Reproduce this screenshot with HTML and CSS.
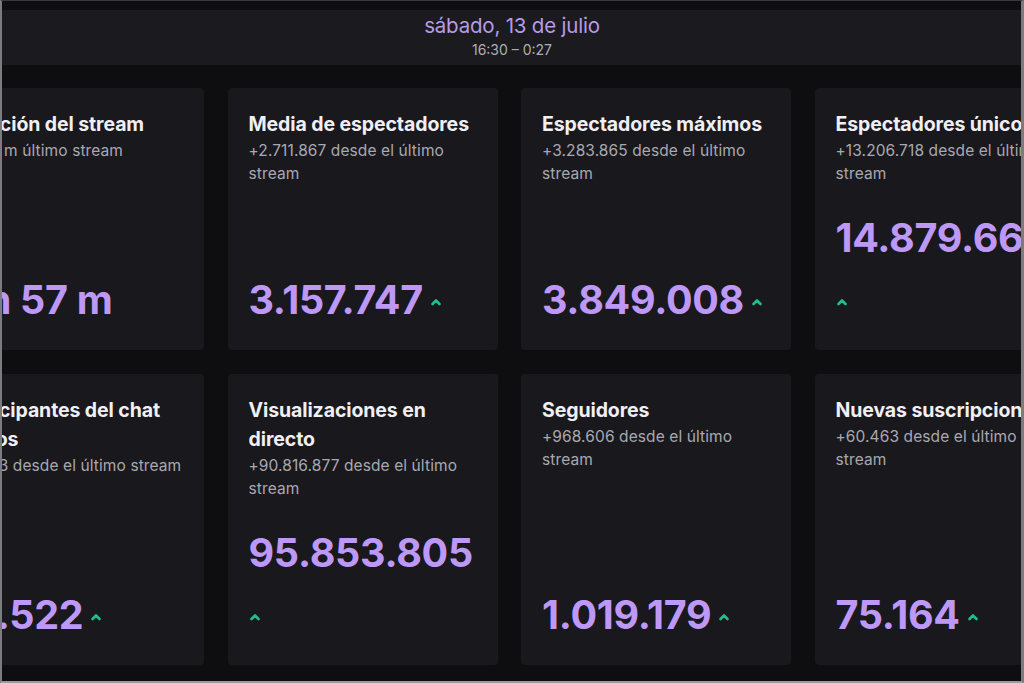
FILE: index.html
```html
<!DOCTYPE html>
<html lang="es">
<head>
<meta charset="utf-8">
<title>Resumen del stream</title>
<link rel="stylesheet" href="styles.css">
</head>
<body>
<div class="frame">
  <header class="topbar">
    <div class="date">sábado, 13 de julio</div>
    <div class="time">16:30 – 0:27</div>
  </header>
  <main class="grid">
    <section class="card">
      <h2 class="title">Duración del stream</h2>
      <p class="sub">+1 h 8 m último stream</p>
      <div class="value"><span class="num">7 h 57 m</span></div>
    </section>
    <section class="card">
      <h2 class="title">Media de espectadores</h2>
      <p class="sub">+2.711.867 desde el último stream</p>
      <div class="value"><span class="num">3.157.747</span><span class="up"><svg viewBox="0 0 12 8" width="12" height="8"><path d="M2.5 6 L6 2.5 L9.5 6"/></svg></span></div>
    </section>
    <section class="card">
      <h2 class="title">Espectadores máximos</h2>
      <p class="sub">+3.283.865 desde el último stream</p>
      <div class="value"><span class="num">3.849.008</span><span class="up"><svg viewBox="0 0 12 8" width="12" height="8"><path d="M2.5 6 L6 2.5 L9.5 6"/></svg></span></div>
    </section>
    <section class="card">
      <h2 class="title">Espectadores únicos</h2>
      <p class="sub">+13.206.718 desde el último stream</p>
      <div class="value"><span class="num">14.879.668</span><span class="up"><svg viewBox="0 0 12 8" width="12" height="8"><path d="M2.5 6 L6 2.5 L9.5 6"/></svg></span></div>
    </section>
    <section class="card">
      <h2 class="title">Participantes del chat únicos</h2>
      <p class="sub">+4.603 desde el último stream</p>
      <div class="value"><span class="num">41.522</span><span class="up"><svg viewBox="0 0 12 8" width="12" height="8"><path d="M2.5 6 L6 2.5 L9.5 6"/></svg></span></div>
    </section>
    <section class="card">
      <h2 class="title">Visualizaciones en directo</h2>
      <p class="sub">+90.816.877 desde el último stream</p>
      <div class="value"><span class="num">95.853.805</span><span class="up"><svg viewBox="0 0 12 8" width="12" height="8"><path d="M2.5 6 L6 2.5 L9.5 6"/></svg></span></div>
    </section>
    <section class="card">
      <h2 class="title">Seguidores</h2>
      <p class="sub">+968.606 desde el último stream</p>
      <div class="value"><span class="num">1.019.179</span><span class="up"><svg viewBox="0 0 12 8" width="12" height="8"><path d="M2.5 6 L6 2.5 L9.5 6"/></svg></span></div>
    </section>
    <section class="card">
      <h2 class="title">Nuevas suscripciones</h2>
      <p class="sub">+60.463 desde el último stream</p>
      <div class="value"><span class="num">75.164</span><span class="up"><svg viewBox="0 0 12 8" width="12" height="8"><path d="M2.5 6 L6 2.5 L9.5 6"/></svg></span></div>
    </section>
  </main>
</div>
</body>
</html>
```

FILE: styles.css
```css
* { box-sizing: border-box; }

html, body {
  margin: 0;
  padding: 0;
  background: #0e0e11;
}

body {
  font-family: Inter, "Noto Sans", "Liberation Sans", sans-serif;
  color: #efeff1;
}

.frame {
  width: 1024px;
  height: 683px;
  overflow: hidden;
  background: #0e0e11;
  border-top: 1px solid #3a3a3e;
  border-left: 2px solid #7c7c80;
  border-right: 3px solid #7c7c80;
  border-bottom: 2px solid #9a9a9e;
  padding-top: 9px;
}

.topbar {
  height: 55px;
  margin-left: -2px;
  margin-right: -3px;
  background: #1b1a1f;
  display: flex;
  flex-direction: column;
  align-items: center;
  padding-top: 3px;
}

.date {
  font-size: 20.5px;
  line-height: 26px;
  color: #b79be6;
  letter-spacing: -0.2px;
}

.time {
  margin-top: 1px;
  font-size: 14px;
  line-height: 19px;
  color: #aeaeb6;
}

.grid {
  margin-top: 23px;
  margin-left: -68px;
  display: grid;
  grid-template-columns: repeat(4, 270px);
  column-gap: 23.5px;
  row-gap: 24px;
}

.card {
  background: #19181d;
  border-radius: 4px;
  padding: 22px 21px 27px;
  display: flex;
  flex-direction: column;
}

.title {
  margin: 0;
  font-size: 19.5px;
  line-height: 29px;
  font-weight: 700;
  color: #f0eff3;
  letter-spacing: -0.1px;
}

.sub {
  margin: 0;
  font-size: 15.5px;
  line-height: 23px;
  color: #a9a8b0;
  letter-spacing: 0.1px;
}

.value {
  margin-top: auto;
  padding-top: 30px;
  display: flex;
  flex-wrap: wrap;
  align-items: center;
  column-gap: 7px;
  row-gap: 16px;
}

.num {
  font-size: 39.5px;
  line-height: 46px;
  font-weight: 700;
  color: #bd98f7;
  letter-spacing: -0.3px;
  white-space: nowrap;
}

.up {
  height: 46px;
  display: flex;
  align-items: center;
  padding-top: 3px;
}

.up svg path {
  fill: none;
  stroke: #1fbf8b;
  stroke-width: 2.6;
  stroke-linecap: round;
  stroke-linejoin: round;
}
```
